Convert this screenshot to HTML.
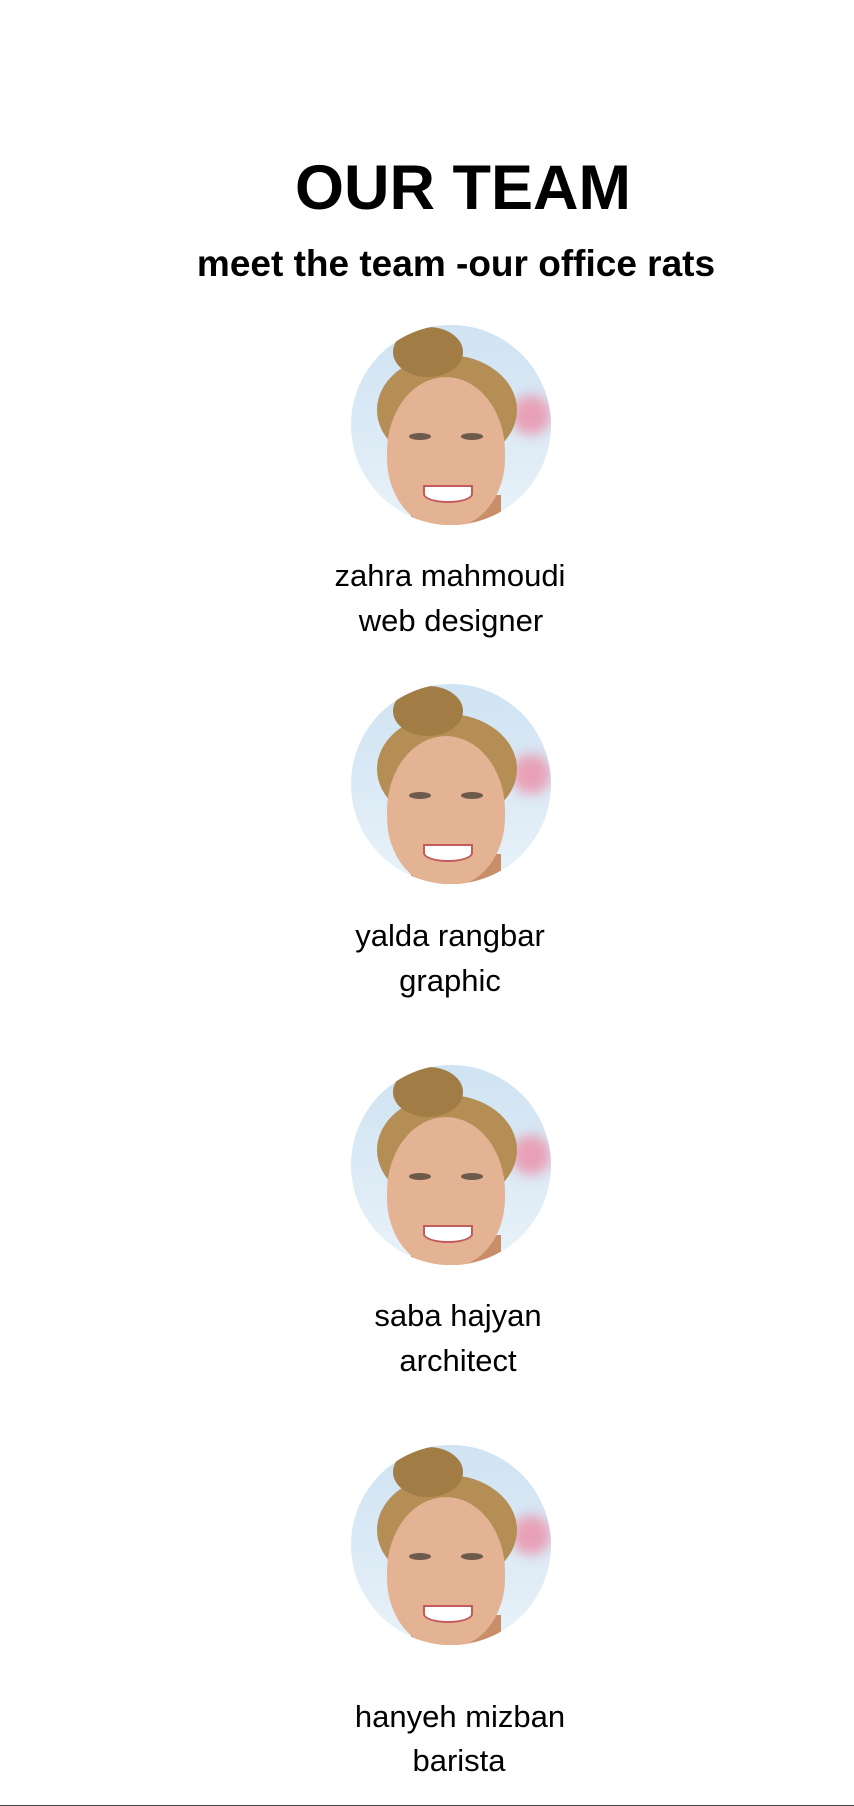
<!DOCTYPE html>
<html><head><meta charset="utf-8"><style>
html,body{margin:0;padding:0;background:#fff;}
body{width:854px;height:1806px;position:relative;overflow:hidden;font-family:"Liberation Sans",Arial,sans-serif;color:#000;}
.t{position:absolute;width:854px;text-align:center;white-space:nowrap;}
h1{position:absolute;left:36px;width:854px;text-align:center;margin:0;top:149px;font-size:63px;font-weight:bold;line-height:78px;}
h2{position:absolute;left:29px;width:854px;text-align:center;margin:0;top:242px;font-size:37px;font-weight:bold;line-height:44px;}
.av{position:absolute;left:351px;width:200px;height:200px;border-radius:50%;overflow:hidden;
background:linear-gradient(180deg,#cfe3f2 0%,#dbeaf6 50%,#e9f2f8 100%);}
.av .pink{position:absolute;right:0;top:70px;width:40px;height:40px;border-radius:50%;background:#e8a0b6;filter:blur(6px);}
.av .hair{position:absolute;left:26px;top:30px;width:140px;height:110px;border-radius:50%;background:#b58e55;}
.av .bun{position:absolute;left:42px;top:2px;width:70px;height:50px;border-radius:50%;background:#a27c45;}
.av .face{position:absolute;left:36px;top:52px;width:118px;height:150px;border-radius:50% 50% 46% 46%;background:#e3b394;}
.av .neck{position:absolute;left:60px;top:170px;width:90px;height:40px;background:#c98e68;}
.av .eye{position:absolute;top:108px;width:22px;height:7px;border-radius:50%;background:#6c5a4a;}
.av .mouth{position:absolute;left:72px;top:160px;width:46px;height:14px;border-radius:0 0 50% 50%;background:#fff;border:2px solid #c25c5c;}
.n{font-size:31px;line-height:36px;}
.line{position:absolute;left:0;bottom:0;width:854px;height:1px;background:#444;}
</style></head><body>
<h1>OUR TEAM</h1>
<h2>meet the team -our office rats</h2>

<div class="av" style="top:325px"><div class="pink"></div><div class="neck"></div><div class="hair"></div><div class="bun"></div><div class="face"></div><div class="eye" style="left:58px"></div><div class="eye" style="left:110px"></div><div class="mouth"></div></div>
<div class="t n" style="top:558px;left:23px">zahra mahmoudi</div>
<div class="t n" style="top:603px;left:24px">web designer</div>

<div class="av" style="top:684px"><div class="pink"></div><div class="neck"></div><div class="hair"></div><div class="bun"></div><div class="face"></div><div class="eye" style="left:58px"></div><div class="eye" style="left:110px"></div><div class="mouth"></div></div>
<div class="t n" style="top:918px;left:23px">yalda rangbar</div>
<div class="t n" style="top:963px;left:23px">graphic</div>

<div class="av" style="top:1065px"><div class="pink"></div><div class="neck"></div><div class="hair"></div><div class="bun"></div><div class="face"></div><div class="eye" style="left:58px"></div><div class="eye" style="left:110px"></div><div class="mouth"></div></div>
<div class="t n" style="top:1298px;left:31px">saba hajyan</div>
<div class="t n" style="top:1343px;left:31px">architect</div>

<div class="av" style="top:1445px"><div class="pink"></div><div class="neck"></div><div class="hair"></div><div class="bun"></div><div class="face"></div><div class="eye" style="left:58px"></div><div class="eye" style="left:110px"></div><div class="mouth"></div></div>
<div class="t n" style="top:1699px;left:33px">hanyeh mizban</div>
<div class="t n" style="top:1743px;left:32px">barista</div>

<div class="line"></div>
</body></html>
